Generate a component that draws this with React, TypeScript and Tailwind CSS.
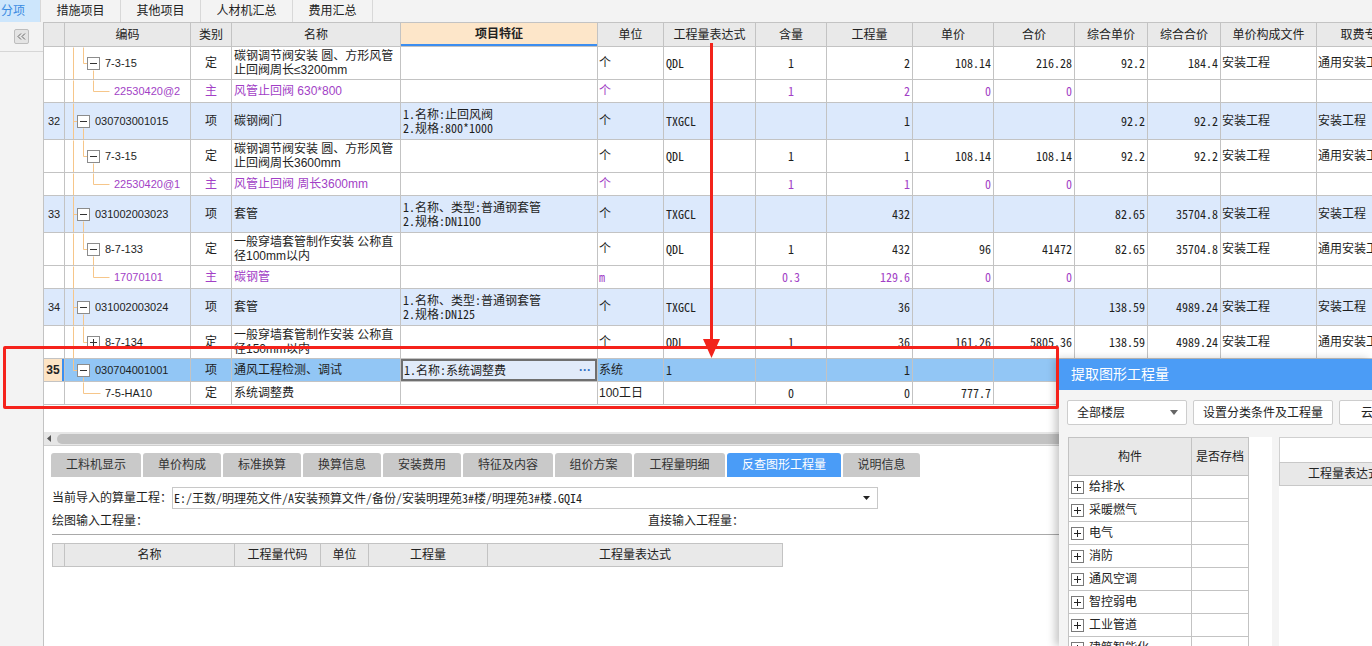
import React from 'react';

const SANS = "font-[family-name:'Liberation_Sans','Noto_Sans_CJK_SC',sans-serif]";
const MONO = "font-[family-name:'Noto_Sans_Mono_CJK_SC','DejaVu_Sans_Mono','Noto_Sans_CJK_SC',monospace]";
const PURPLE = 'text-[#a23fc6]';
const COLS = 'grid grid-cols-[21px_126px_41px_169px_197px_66px_92px_71px_86px_81px_81px_73px_73px_96px_96px] w-[1369px]';
const ROW_H: Record<number, string> = { 23: 'h-[23px]', 33: 'h-[33px]', 37: 'h-[37px]' };

type Kind = 'top' | 'topLast' | 'def' | 'defPlus' | 'main' | 'leaf';

type Row = {
  h: number;
  kind: Kind;
  num?: string;
  code: string;
  type: string;
  name: string[];
  feat?: string[];
  unit?: string;
  expr?: string;
  content?: string;
  qty?: string;
  price?: string;
  total?: string;
  cprice?: string;
  ctotal?: string;
  file?: string;
  fee?: string;
  purple?: boolean;
  blue?: boolean;
  sel?: boolean;
};

const rows: Row[] = [
  { h: 33, kind: 'def', code: '7-3-15', type: '定', name: ['碳钢调节阀安装 圆、方形风管', '止回阀周长≤3200mm'], unit: '个', expr: 'QDL', content: '1', qty: '2', price: '108.14', total: '216.28', cprice: '92.2', ctotal: '184.4', file: '安装工程', fee: '通用安装工程' },
  { h: 23, kind: 'main', purple: true, code: '22530420@2', type: '主', name: ['风管止回阀 630*800'], unit: '个', content: '1', qty: '2', price: '0', total: '0' },
  { h: 37, kind: 'top', blue: true, num: '32', code: '030703001015', type: '项', name: ['碳钢阀门'], feat: ['1.名称:止回风阀', '2.规格:800*1000'], unit: '个', expr: 'TXGCL', qty: '1', cprice: '92.2', ctotal: '92.2', file: '安装工程', fee: '安装工程' },
  { h: 33, kind: 'def', code: '7-3-15', type: '定', name: ['碳钢调节阀安装 圆、方形风管', '止回阀周长3600mm'], unit: '个', expr: 'QDL', content: '1', qty: '1', price: '108.14', total: '108.14', cprice: '92.2', ctotal: '92.2', file: '安装工程', fee: '通用安装工程' },
  { h: 23, kind: 'main', purple: true, code: '22530420@1', type: '主', name: ['风管止回阀 周长3600mm'], unit: '个', content: '1', qty: '1', price: '0', total: '0' },
  { h: 37, kind: 'top', blue: true, num: '33', code: '031002003023', type: '项', name: ['套管'], feat: ['1.名称、类型:普通钢套管', '2.规格:DN1100'], unit: '个', expr: 'TXGCL', qty: '432', cprice: '82.65', ctotal: '35704.8', file: '安装工程', fee: '安装工程' },
  { h: 33, kind: 'def', code: '8-7-133', type: '定', name: ['一般穿墙套管制作安装 公称直', '径100mm以内'], unit: '个', expr: 'QDL', content: '1', qty: '432', price: '96', total: '41472', cprice: '82.65', ctotal: '35704.8', file: '安装工程', fee: '通用安装工程' },
  { h: 23, kind: 'main', purple: true, code: '17070101', type: '主', name: ['碳钢管'], unit: 'm', content: '0.3', qty: '129.6', price: '0', total: '0' },
  { h: 37, kind: 'top', blue: true, num: '34', code: '031002003024', type: '项', name: ['套管'], feat: ['1.名称、类型:普通钢套管', '2.规格:DN125'], unit: '个', expr: 'TXGCL', qty: '36', cprice: '138.59', ctotal: '4989.24', file: '安装工程', fee: '安装工程' },
  { h: 33, kind: 'defPlus', code: '8-7-134', type: '定', name: ['一般穿墙套管制作安装 公称直', '径150mm以内'], unit: '个', expr: 'QDL', content: '1', qty: '36', price: '161.26', total: '5805.36', cprice: '138.59', ctotal: '4989.24', file: '安装工程', fee: '通用安装工程' },
  { h: 23, kind: 'topLast', sel: true, num: '35', code: '030704001001', type: '项', name: ['通风工程检测、调试'], feat: ['1.名称:系统调整费'], unit: '系统', expr: '1', qty: '1' },
  { h: 23, kind: 'leaf', code: '7-5-HA10', type: '定', name: ['系统调整费'], unit: '100工日', content: '0', qty: '0', price: '777.7' },
];

// tree connector lines + expand box inside the 编码 cell
function Tree({ kind, h }: { kind: Kind; h: number }) {
  const m = Math.floor(h / 2);
  const segs: number[][] = [];
  let box: { x: number; plus: boolean } | null = null;
  if (kind === 'top' || kind === 'topLast') {
    segs.push([8, 0, 8, kind === 'topLast' ? m : h]);
    segs.push([8, m, 12, m]);
    segs.push([18, m + 7, 18, h]);
    box = { x: 12, plus: false };
  } else if (kind === 'def' || kind === 'defPlus') {
    segs.push([8, 0, 8, h]);
    segs.push([18, 0, 18, m]);
    segs.push([18, m, 22, m]);
    if (kind === 'def') segs.push([28, m + 7, 28, h]);
    box = { x: 22, plus: kind === 'defPlus' };
  } else if (kind === 'main') {
    segs.push([8, 0, 8, h]);
    segs.push([28, 0, 28, m]);
    segs.push([28, m, 44, m]);
  } else {
    segs.push([18, 0, 18, m]);
    segs.push([18, m, 35, m]);
  }
  return (
    <svg className="absolute left-0 top-0" width="126" height={h}>
      {segs.map(([x1, y1, x2, y2], i) => (
        <line key={i} x1={x1 + 0.5} y1={y1 + 0.5} x2={x2 + 0.5} y2={y2 + 0.5} stroke="#f6c68a" strokeWidth="1" />
      ))}
      {box && (
        <g>
          <rect x={box.x + 0.5} y={m - 6 + 0.5} width="12" height="12" fill="#fff" stroke="#8c8c8c" />
          <line x1={box.x + 3} y1={m + 0.5} x2={box.x + 10} y2={m + 0.5} stroke="#333" />
          {box.plus && <line x1={box.x + 6.5} y1={m - 3} x2={box.x + 6.5} y2={m + 4} stroke="#333" />}
        </g>
      )}
    </svg>
  );
}

function C({ className = '', children }: { className?: string; children?: React.ReactNode }) {
  return <div className={`border-b border-r border-[#c3c3c3] overflow-hidden min-w-0 ${className}`}>{children}</div>;
}

const codePad: Record<Kind, string> = {
  top: 'pl-[30px]',
  topLast: 'pl-[30px]',
  def: 'pl-[40px]',
  defPlus: 'pl-[40px]',
  main: 'pl-[49px]',
  leaf: 'pl-[40px]',
};

function TableRow({ r }: { r: Row }) {
  const bg = r.sel ? 'bg-[#92c6f5]' : r.blue ? 'bg-[#dce9fc]' : 'bg-white';
  const tc = r.purple ? PURPLE : '';
  const num = `${MONO} text-[12px] ${tc} flex items-center justify-end pr-[2px]`;
  return (
    <div className={`${COLS} ${ROW_H[r.h]} ${bg}`}>
      {r.sel ? (
        <C className="flex bg-[#fde4c5]">
          <div className="flex-1 flex items-center justify-center text-[12px] font-bold text-[#222]">{r.num}</div>
          <div className="w-[2px] bg-[#3b8ff0]" />
        </C>
      ) : (
        <C className="flex items-center justify-center text-[11px] text-[#222]">{r.num}</C>
      )}
      <C className={`relative flex items-center text-[11px] ${tc} ${codePad[r.kind]}`}>
        <Tree kind={r.kind} h={r.h - 1} />
        <span className="relative">{r.code}</span>
      </C>
      <C className={`flex items-center justify-center text-[12px] ${tc}`}>{r.type}</C>
      <C className={`flex flex-col justify-center pl-[2px] text-[12px] leading-[14px] ${tc}`}>
        {r.name.map((n, i) => (
          <div key={i} className="whitespace-nowrap h-[14px]">{n}</div>
        ))}
      </C>
      {r.sel ? (
        <C className="flex">
          <div className="flex-1 flex items-center justify-between border-2 border-[#6f6f6f] bg-[#e1ebfa] pl-[1px] pr-[4px] text-[12px]">
            <span className={MONO}>{r.feat?.[0]}</span>
            <span className="text-[#2f6fc4] text-[12px] font-bold">···</span>
          </div>
        </C>
      ) : (
        <C className={`flex flex-col justify-center pl-[2px] text-[12px] leading-[14px] ${MONO}`}>
          {r.feat?.map((f, i) => (
            <div key={i} className="whitespace-nowrap h-[14px]">{f}</div>
          ))}
        </C>
      )}
      <C className={`flex items-center pl-[1px] text-[12px] ${r.unit === 'm' ? MONO : ''} ${tc}`}>{r.unit}</C>
      <C className={`flex items-center pl-[2px] text-[12px] ${MONO}`}>{r.expr}</C>
      <C className={`flex items-center justify-center text-[12px] ${MONO} ${tc}`}>{r.content}</C>
      <C className={num}>{r.qty}</C>
      <C className={num}>{r.price}</C>
      <C className={num}>{r.total}</C>
      <C className={num}>{r.cprice}</C>
      <C className={num}>{r.ctotal}</C>
      <C className="flex items-center pl-[1px] text-[12px] whitespace-nowrap">{r.file}</C>
      <C className="flex items-center pl-[1px] text-[12px] whitespace-nowrap">{r.fee}</C>
    </div>
  );
}

const headers = ['', '编码', '类别', '名称', '项目特征', '单位', '工程量表达式', '含量', '工程量', '单价', '合价', '综合单价', '综合合价', '单价构成文件', '取费专业'];

const bottomTabs = [
  { t: '工料机显示', w: 'w-[90px]' },
  { t: '单价构成', w: 'w-[78px]' },
  { t: '标准换算', w: 'w-[78px]' },
  { t: '换算信息', w: 'w-[78px]' },
  { t: '安装费用', w: 'w-[78px]' },
  { t: '特征及内容', w: 'w-[90px]' },
  { t: '组价方案', w: 'w-[77px]' },
  { t: '工程量明细', w: 'w-[91px]' },
  { t: '反查图形工程量', w: 'w-[114px]', active: true },
  { t: '说明信息', w: 'w-[77px]' },
];

const treeItems = ['给排水', '采暖燃气', '电气', '消防', '通风空调', '智控弱电', '工业管道', '建筑智能化'];

function PlusBox() {
  return (
    <svg width="13" height="13" className="shrink-0">
      <rect x="0.5" y="0.5" width="12" height="12" fill="#fff" stroke="#7a7a7a" />
      <line x1="3" y1="6.5" x2="10" y2="6.5" stroke="#222" />
      <line x1="6.5" y1="3" x2="6.5" y2="10" stroke="#222" />
    </svg>
  );
}

export default function App() {
  return (
    <div className={`relative w-[1372px] h-[646px] overflow-hidden bg-white text-[#1e1e1e] ${SANS}`}>
      {/* page tabs */}
      <div className="flex h-[22px] bg-[#f3f3f3] text-[12px] text-[#222]">
        <div className="w-[41px] bg-[#cde6fc] text-[#3a8be2] border-r border-[#d8d8d8] flex items-center pl-[1px]">分项</div>
        <div className="w-[80px] border-r border-[#d8d8d8] flex items-center justify-center">措施项目</div>
        <div className="w-[80px] border-r border-[#d8d8d8] flex items-center justify-center">其他项目</div>
        <div className="w-[92px] border-r border-[#d8d8d8] flex items-center justify-center">人材机汇总</div>
        <div className="w-[80px] border-r border-[#d8d8d8] flex items-center justify-center">费用汇总</div>
      </div>

      <div className="flex h-[624px]">
        {/* collapsed side panel */}
        <aside className="w-[43px] shrink-0 bg-[#f3f3f3]">
          <div className="h-[30px] border-b border-[#d6d6d6] flex items-center justify-center">
            <div className="w-[15px] h-[15px] border border-[#bdbdbd] bg-[#e4e4e4] rounded-[2px] flex items-center justify-center">
              <svg width="9" height="7">
                <polyline points="4,0.5 1,3.5 4,6.5" fill="none" stroke="#666" />
                <polyline points="8,0.5 5,3.5 8,6.5" fill="none" stroke="#666" />
              </svg>
            </div>
          </div>
        </aside>

        <main className="flex-1 min-w-0 border-l border-[#c3c3c3] flex flex-col overflow-hidden">
          {/* main grid */}
          <div className="border-t border-[#c3c3c3] w-[1369px]">
            <div className={`${COLS} h-[24px] bg-[#e9e9e9] text-[12px] text-[#222]`}>
              {headers.map((h, i) =>
                h === '项目特征' ? (
                  <C key={i} className="flex flex-col bg-[#fde6c9]">
                    <div className="flex-1 flex items-center justify-center font-bold">{h}</div>
                    <div className="h-[2px] bg-[#3c8ef0]" />
                  </C>
                ) : (
                  <C key={i} className="flex items-center justify-center whitespace-nowrap">{h}</C>
                )
              )}
            </div>
            {rows.map((r, i) => (
              <TableRow key={i} r={r} />
            ))}
          </div>
          <div className="h-[27px] bg-white shrink-0" />

          {/* horizontal scrollbar */}
          <div className="h-[13px] bg-[#e6e6e6] flex items-center shrink-0">
            <svg width="13" height="13" className="shrink-0">
              <polygon points="3,6.5 7,3 7,10" fill="#555" />
            </svg>
            <div className="h-[10px] w-[1100px] shrink-0 rounded-full bg-[#c2c2c2]" />
          </div>

          {/* bottom detail panel */}
          <div className="border-t border-[#cfcfcf] pt-[7px] flex-1 bg-white">
            <div className="flex gap-[2px] pl-[7px] text-[12px]">
              {bottomTabs.map((t) => (
                <div
                  key={t.t}
                  className={`${t.w} h-[24px] rounded-t-[3px] flex items-center justify-center ${t.active ? 'bg-[#4a9cf7] text-white' : 'bg-[#c9c9c9] text-[#333]'}`}
                >
                  {t.t}
                </div>
              ))}
            </div>

            <div className="flex items-center mt-[10px] pl-[8px] text-[12px]">
              <div className="w-[120px]">当前导入的算量工程：</div>
              <div className="w-[706px] h-[22px] border border-[#c8c8c8] flex items-center justify-between pl-[1px] pr-[7px]">
                <span className={`${MONO} text-[12px]`}>E:/王数/明理苑文件/A安装预算文件/备份/安装明理苑3#楼/明理苑3#楼.GQI4</span>
                <svg width="7" height="4">
                  <polygon points="0,0 7,0 3.5,4" fill="#222" />
                </svg>
              </div>
            </div>
            <div className="flex items-center h-[20px] mt-[2px] pl-[8px] text-[12px]">
              <div className="w-[596px]">绘图输入工程量：</div>
              <div>直接输入工程量：</div>
            </div>
            <div className="mt-[3px] ml-[8px] border-t border-[#a9a9a9]" />

            <div className="mt-[8px] ml-[8px] w-[731px] border-t border-l border-[#c3c3c3] grid grid-cols-[12px_170px_86px_48px_119px_295px] h-[24px] bg-[#e9e9e9] text-[12px] text-[#222]">
              {['', '名称', '工程量代码', '单位', '工程量', '工程量表达式'].map((h, i) => (
                <C key={i} className="flex items-center justify-center">{h}</C>
              ))}
            </div>
          </div>
        </main>
      </div>

      {/* 提取图形工程量 dialog */}
      <div className="absolute left-[1059px] top-[359px] w-[313px] h-[287px] bg-[#f4f4f4] shadow-[-4px_0_8px_rgba(0,0,0,0.22)] flex flex-col z-10">
        <div className="h-[31px] shrink-0 bg-[#4b9cf6] text-white text-[14px] flex items-center pl-[12px]">提取图形工程量</div>
        <div className="flex items-center gap-[6px] pl-[8px] mt-[10px] h-[25px] text-[12px] text-[#222] shrink-0">
          <div className="w-[120px] h-[25px] shrink-0 bg-white border border-[#cdcdcd] rounded-[2px] flex items-center justify-between pl-[9px] pr-[8px]">
            <span>全部楼层</span>
            <svg width="8" height="5">
              <polygon points="0,0 8,0 4,5" fill="#666" />
            </svg>
          </div>
          <div className="w-[140px] h-[25px] shrink-0 bg-white border border-[#cdcdcd] rounded-[2px] flex items-center justify-center">设置分类条件及工程量</div>
          <div className="w-[80px] h-[25px] shrink-0 bg-white border border-[#cdcdcd] rounded-[2px] flex items-center pl-[21px]">云检查</div>
        </div>
        <div className="flex mt-[12px] pl-[9px] flex-1 min-h-0">
          <div className="w-[204px] shrink-0 bg-white">
            <div className="w-[181px] border-t border-l border-[#c3c3c3] text-[12px] text-[#222]">
              <div className="grid grid-cols-[123px_57px] h-[38px] bg-[#e8e8e8]">
                <C className="flex items-center justify-center">构件</C>
                <C className="flex items-center justify-center whitespace-nowrap">是否存档</C>
              </div>
              {treeItems.map((t) => (
                <div key={t} className="grid grid-cols-[123px_57px] h-[23px]">
                  <C className="flex items-center gap-[5px] pl-[2px]">
                    <PlusBox />
                    <span>{t}</span>
                  </C>
                  <C />
                </div>
              ))}
            </div>
          </div>
          <div className="w-[7px] shrink-0" />
          <div className="flex-1 bg-white">
            <div className="h-[25px] border-t border-l border-[#d0d0d0]" />
            <div className="h-[24px] bg-[#e8e8e8] border-t border-l border-b border-[#c8c8c8] flex items-center pl-[28px] text-[12px] text-[#222] whitespace-nowrap">工程量表达式</div>
          </div>
        </div>
      </div>

      {/* red annotation */}
      <div className="absolute left-[3px] top-[346px] w-[1056px] h-[63px] border-[3px] border-[#f5221b] rounded-[2px] pointer-events-none z-20" />
      <svg className="absolute left-0 top-0 pointer-events-none z-20" width="1372" height="646">
        <line x1="711.5" y1="43" x2="711.5" y2="342" stroke="#f2231b" strokeWidth="3" />
        <polygon points="703,339 720,339 711.5,358" fill="#f2231b" />
      </svg>
    </div>
  );
}
